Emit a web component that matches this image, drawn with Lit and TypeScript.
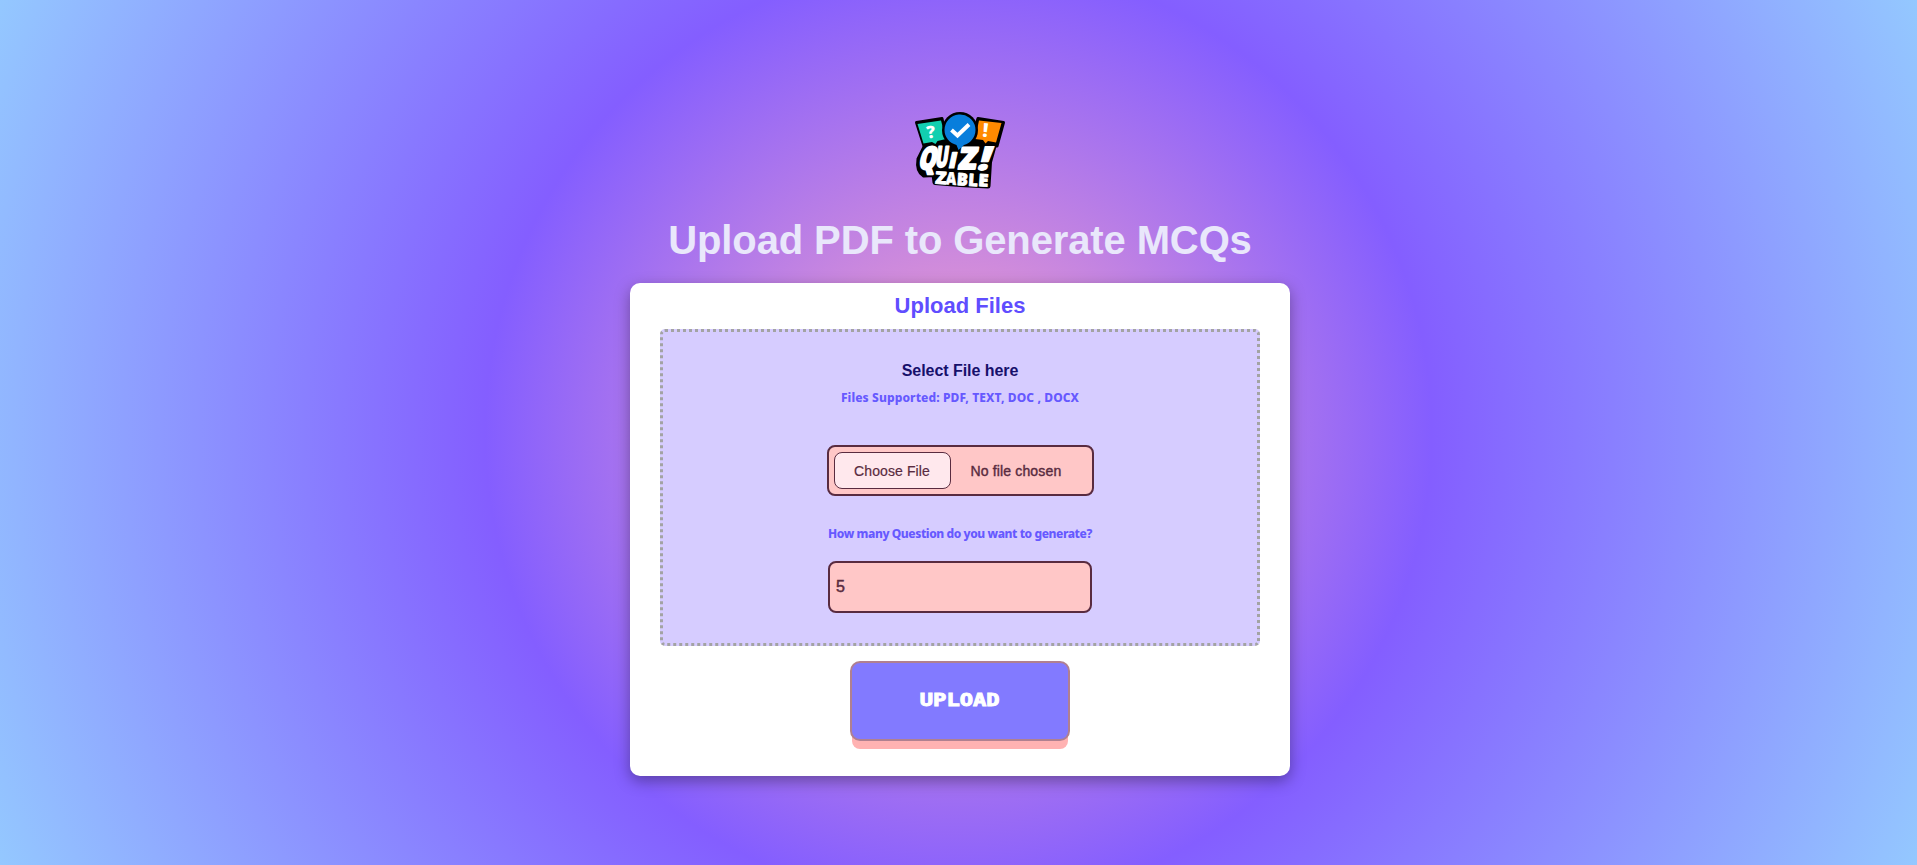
import { LitElement, html, css, svg } from "lit";
import { customElement } from "lit/decorators.js";

const glyph = (t: string, x: number, y: number, size: number, len: number, outline: number, skew: number) => svg`
  <text font-size=${size} textLength=${len} lengthAdjust="spacingAndGlyphs" class="word" stroke-width=${outline}
    transform="translate(${x} ${y}) skewX(${skew})">${t}</text>`;

@customElement("quiz-logo")
export class QuizLogo extends LitElement {
  static styles = css`
    :host { display: block; width: 120px; height: 100px; }
    svg { display: block; }
    .word { font-family: "Open Sans", "Noto Sans", sans-serif; font-weight: 800; fill: #fff; stroke: #fff; stroke-linejoin: round; }
    .mark { font-family: "Open Sans", sans-serif; font-weight: 800; fill: #fff; }
  `;
  render() {
    return html`<svg width="120" height="100" viewBox="0 0 120 100">
      <path d="M16.500 22.500 L42 18.500 L48 46 L24 46Z" fill="#000" stroke="#000" stroke-width="3" stroke-linejoin="round"/>
      <path d="M78 18.500 L103.500 22.500 L97 46 L70 46Z" fill="#000" stroke="#000" stroke-width="3" stroke-linejoin="round"/>
      <path d="M25 47 L46 43 L60 47 L74 45 L94 46 L89.500 62 L88 86 L60 84.500 L35 82.500 L34 74.500 L24 75 Q17 71 19 59Z" fill="#000" stroke="#000" stroke-width="5" stroke-linejoin="round"/>
      <path d="M17.500 24 L41 20.500 L46 39 L37.500 41 L35.500 44 L32 42 L23.500 43.500Z" fill="#12cfb0"/>
      <path d="M79 20.500 L101.500 23 L96 42.500 L88 41 L85.500 43.500 L83 40 L75 39Z" fill="#ff8a00"/>
      <circle cx="60" cy="30" r="18" fill="#000"/>
      <path d="M51.500 30 L57.500 35.500 L69 24.500" fill="none"/>
      ${glyph("Q", 17.5, 69, 31, 17.5, 2.2, -14)}
      ${glyph("U", 34.8, 66.5, 29, 12.5, 1.8, -8)}
      ${glyph("I", 47.5, 67.5, 22, 8, 1.2, -12)}
      ${glyph("Z", 57.5, 68.5, 30, 18, 2, -10)}
      ${glyph("!", 76, 70, 33, 12, 1, -18)}
      <g transform="rotate(4 35 84)">${glyph("Z", 35, 83.5, 17, 11, 1, 0)}${glyph("A", 45.500, 83.5, 17, 10.5, 0.6, 0)}${glyph("B", 56.5, 83.5, 17, 11, 0.8, 0)}${glyph("L", 68, 83.5, 17, 9.5, 0.9, 0)}${glyph("E", 78, 83, 17, 10, 0.9, 0)}</g>
      <path d="M44.500 30 A15.500 15.500 0 1 1 64 45 L58.500 50 L56.500 45 A15.500 15.500 0 0 1 44.500 30Z" fill="#087edc"/>
      <path d="M51.500 30 L57.500 35.500 L69 24.500" fill="none" stroke="#fff" stroke-width="4"/>
      <text class="mark" x="26.500" y="38" font-size="17" transform="rotate(-8 31 32)">?</text>
      <text class="mark" x="82.500" y="37" font-size="19" transform="rotate(6 86 32)">!</text>
    </svg>`;
  }
}

@customElement("app-root")
export class AppRoot extends LitElement {
  static styles = css`
    * { box-sizing: border-box; }
    :host {
      display: flex; flex-direction: column; align-items: center; box-sizing: border-box;
      height: 865px; padding: 100px 0 0 3px; overflow: hidden;
      font-family: "Liberation Sans", Arial, sans-serif;
      background: radial-gradient(circle, #f9a4c8 0%, #845eff 45%, #94c8ff 100%);
    }
    h1, h2, h3, p { margin: 0; text-align: center; white-space: nowrap; }
    h1 { margin-top: 16px; font-size: 40px; line-height: 48px; letter-spacing: -.12px; color: #e9e7fb; }
    .card {
      display: flex; flex-direction: column; align-items: center;
      width: 660px; height: 493px; margin-top: 19px; padding-top: 9px;
      background: #fff; border-radius: 10px; box-shadow: 0 5px 15px rgba(0, 0, 0, .35);
    }
    h2 { font-size: 22px; line-height: 28px; color: #604dff; }
    .drop {
      display: flex; flex-direction: column; align-items: center;
      width: 600px; height: 317px; margin-top: 9px; padding-top: 28px;
      background: #d6ccff; border: 3px dotted #a3a3a3; border-radius: 5px;
    }
    h3 { font-size: 16px; line-height: 22px; letter-spacing: -.05px; color: #16106b; }
    .note { font-family: "Noto Sans", sans-serif; font-weight: 800; font-size: 12px; line-height: 18px; color: #6659ff; }
    .supported { margin-top: 7px; letter-spacing: .1px; }
    .file {
      display: flex; align-items: center; width: 267px; height: 51px; margin-top: 38px; padding-left: 5px;
      border: 2px solid #592b40; border-radius: 8px; background: #ffc7c7; color: #592b40;
    }
    .choose {
      width: 117px; height: 37px; border: 1px solid #592b40; border-radius: 8px; background: #ffe8ed;
      color: #592b40; font: 14px "Liberation Sans", sans-serif; letter-spacing: .1px; padding: 0;
      -webkit-text-stroke: .2px #592b40;
    }
    .none { margin-left: 20px; font-size: 14px; letter-spacing: .15px; -webkit-text-stroke: .4px #592b40; }
    .ask { margin-top: 29px; letter-spacing: -.42px; }
    .count {
      width: 264px; height: 52px; margin-top: 18px; padding: 0 6px; border: 2px solid #592b40; border-radius: 8px;
      background: #ffc7c7; color: #592b40; font: 16px "Liberation Sans", sans-serif; outline: none;
      -webkit-text-stroke: .5px #592b40;
    }
    .upload {
      width: 220px; height: 80px; margin-top: 15px; border: 2px solid #b08090; border-radius: 10px;
      background: #827aff; color: #fff; box-shadow: 0 10px 0 -2px #ffb2b2; padding: 0 0 2px;
    }
    .upload span {
      display: inline-block; font: bold 17px/20px "DejaVu Sans Mono", monospace;
      transform: scaleX(1.3); -webkit-text-stroke: .9px #fff;
    }
  `;
  render() {
    return html`
      <quiz-logo></quiz-logo>
      <h1>Upload PDF to Generate MCQs</h1>
      <section class="card">
        <h2>Upload Files</h2>
        <div class="drop">
          <h3>Select File here</h3>
          <p class="note supported">Files Supported: PDF, TEXT, DOC , DOCX</p>
          <div class="file"><button class="choose">Choose File</button><span class="none">No file chosen</span></div>
          <p class="note ask">How many Question do you want to generate?</p>
          <input class="count" .value=${"5"} />
        </div>
        <button class="upload"><span>UPLOAD</span></button>
      </section>`;
  }
}
